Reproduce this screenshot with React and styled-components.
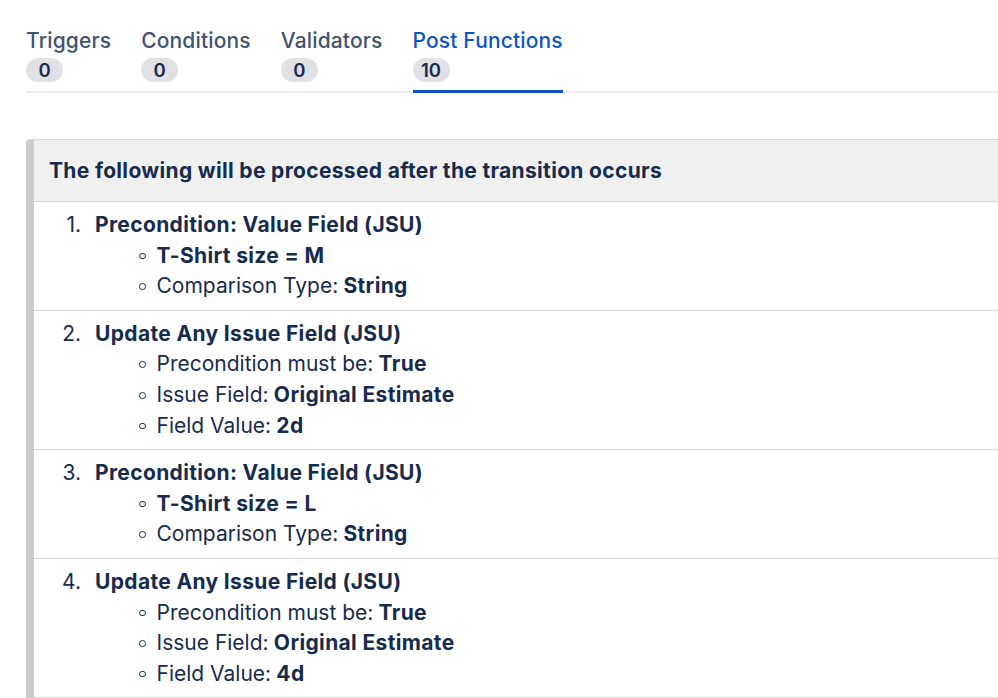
import React from "react";
import styled, { createGlobalStyle } from "styled-components";

const Global = createGlobalStyle`
  html, body { margin: 0; padding: 0; background: #ffffff; overflow: hidden; }
  body { font-family: Inter, "Noto Sans", "Liberation Sans", sans-serif; color: #172b4d; }
`;

const Page = styled.div`
  width: 998px;
  height: 698px;
  overflow: hidden;
  padding-top: 29px;
  box-sizing: border-box;
`;

const TabBar = styled.div`
  display: flex;
  gap: 30px;
  margin-left: 26px;
  border-bottom: 2px solid #ebecf0;
`;

const Tab = styled.div`
  display: flex;
  flex-direction: column;
  align-items: flex-start;
  gap: 5px;
  padding-bottom: 8px;
  margin-bottom: -2px;
  border-bottom: 3px solid ${(p) => (p.$active ? "#0c56c2" : "transparent")};
`;

const TabLabel = styled.div`
  font-size: 21px;
  line-height: 24px;
  font-weight: 500;
  letter-spacing: 0.15px;
  color: ${(p) => (p.$active ? "#0c56c2" : "#42526e")};
  white-space: nowrap;
`;

const Badge = styled.span`
  display: inline-flex;
  align-items: center;
  justify-content: center;
  height: 24px;
  min-width: 37px;
  padding: 0 8px;
  box-sizing: border-box;
  border-radius: 12px;
  background: #dfe1e6;
  color: #172b4d;
  font-size: 18.5px;
  font-weight: 600;
`;

const Panel = styled.div`
  margin: 46px 0 0 26px;
  width: 1000px;
  border-left: 8px solid #cccccc;
  border-top: 1px solid #d6d6d6;
  border-top-left-radius: 4px;
`;

const PanelHeader = styled.div`
  background: #f0f0f0;
  height: 61px;
  display: flex;
  align-items: center;
  padding-left: 15px;
  font-size: 21px;
  font-weight: 700;
  letter-spacing: 0.33px;
  color: #172b4d;
  border-bottom: 1px solid #d6d6d6;
`;

const Steps = styled.ol`
  list-style: none;
  margin: 0;
  padding: 0;
`;

const Step = styled.li`
  display: grid;
  grid-template-columns: 61px 1fr;
  padding: 8px 0 8px;
  border-bottom: 1px solid #d8d8d8;
  font-size: 21px;
  line-height: 30.6px;
`;

const Num = styled.span`
  text-align: right;
  padding-right: 14px;
  color: #172b4d;
`;

const StepTitle = styled.div`
  font-weight: 700;
  letter-spacing: 0.35px;
`;

const SubList = styled.ul`
  list-style: none;
  margin: 0;
  padding: 0 0 0 44px;
`;

const SubItem = styled.li`
  display: flex;
  align-items: center;
  gap: 11px;
  &::before {
    content: "";
    width: 4.5px;
    height: 4.5px;
    border: 1.3px solid #172b4d;
    border-radius: 50%;
    flex: none;
  }
`;

const B = styled.b`
  font-weight: 700;
  letter-spacing: 0.35px;
  margin-left: 0.25em;
`;

const tabs = [
  { label: "Triggers", count: 0 },
  { label: "Conditions", count: 0 },
  { label: "Validators", count: 0 },
  { label: "Post Functions", count: 10, active: true },
];

const steps = [
  {
    title: "Precondition: Value Field (JSU)",
    items: [
      { bold: "T-Shirt size = M" },
      { label: "Comparison Type:", value: "String" },
    ],
  },
  {
    title: "Update Any Issue Field (JSU)",
    items: [
      { label: "Precondition must be:", value: "True" },
      { label: "Issue Field:", value: "Original Estimate" },
      { label: "Field Value:", value: "2d" },
    ],
  },
  {
    title: "Precondition: Value Field (JSU)",
    items: [
      { bold: "T-Shirt size = L" },
      { label: "Comparison Type:", value: "String" },
    ],
  },
  {
    title: "Update Any Issue Field (JSU)",
    items: [
      { label: "Precondition must be:", value: "True" },
      { label: "Issue Field:", value: "Original Estimate" },
      { label: "Field Value:", value: "4d" },
    ],
  },
];

export default function App() {
  return (
    <Page>
      <Global />
      <TabBar>
        {tabs.map((t) => (
          <Tab key={t.label} $active={t.active}>
            <TabLabel $active={t.active}>{t.label}</TabLabel>
            <Badge>{t.count}</Badge>
          </Tab>
        ))}
      </TabBar>
      <Panel>
        <PanelHeader>The following will be processed after the transition occurs</PanelHeader>
        <Steps>
          {steps.map((s, i) => (
            <Step key={i}>
              <Num>{i + 1}.</Num>
              <div>
                <StepTitle>{s.title}</StepTitle>
                <SubList>
                  {s.items.map((it, j) => (
                    <SubItem key={j}>
                      {it.bold ? (
                        <StepTitle>{it.bold}</StepTitle>
                      ) : (
                        <span>
                          {it.label}
                          <B>{it.value}</B>
                        </span>
                      )}
                    </SubItem>
                  ))}
                </SubList>
              </div>
            </Step>
          ))}
        </Steps>
      </Panel>
    </Page>
  );
}
